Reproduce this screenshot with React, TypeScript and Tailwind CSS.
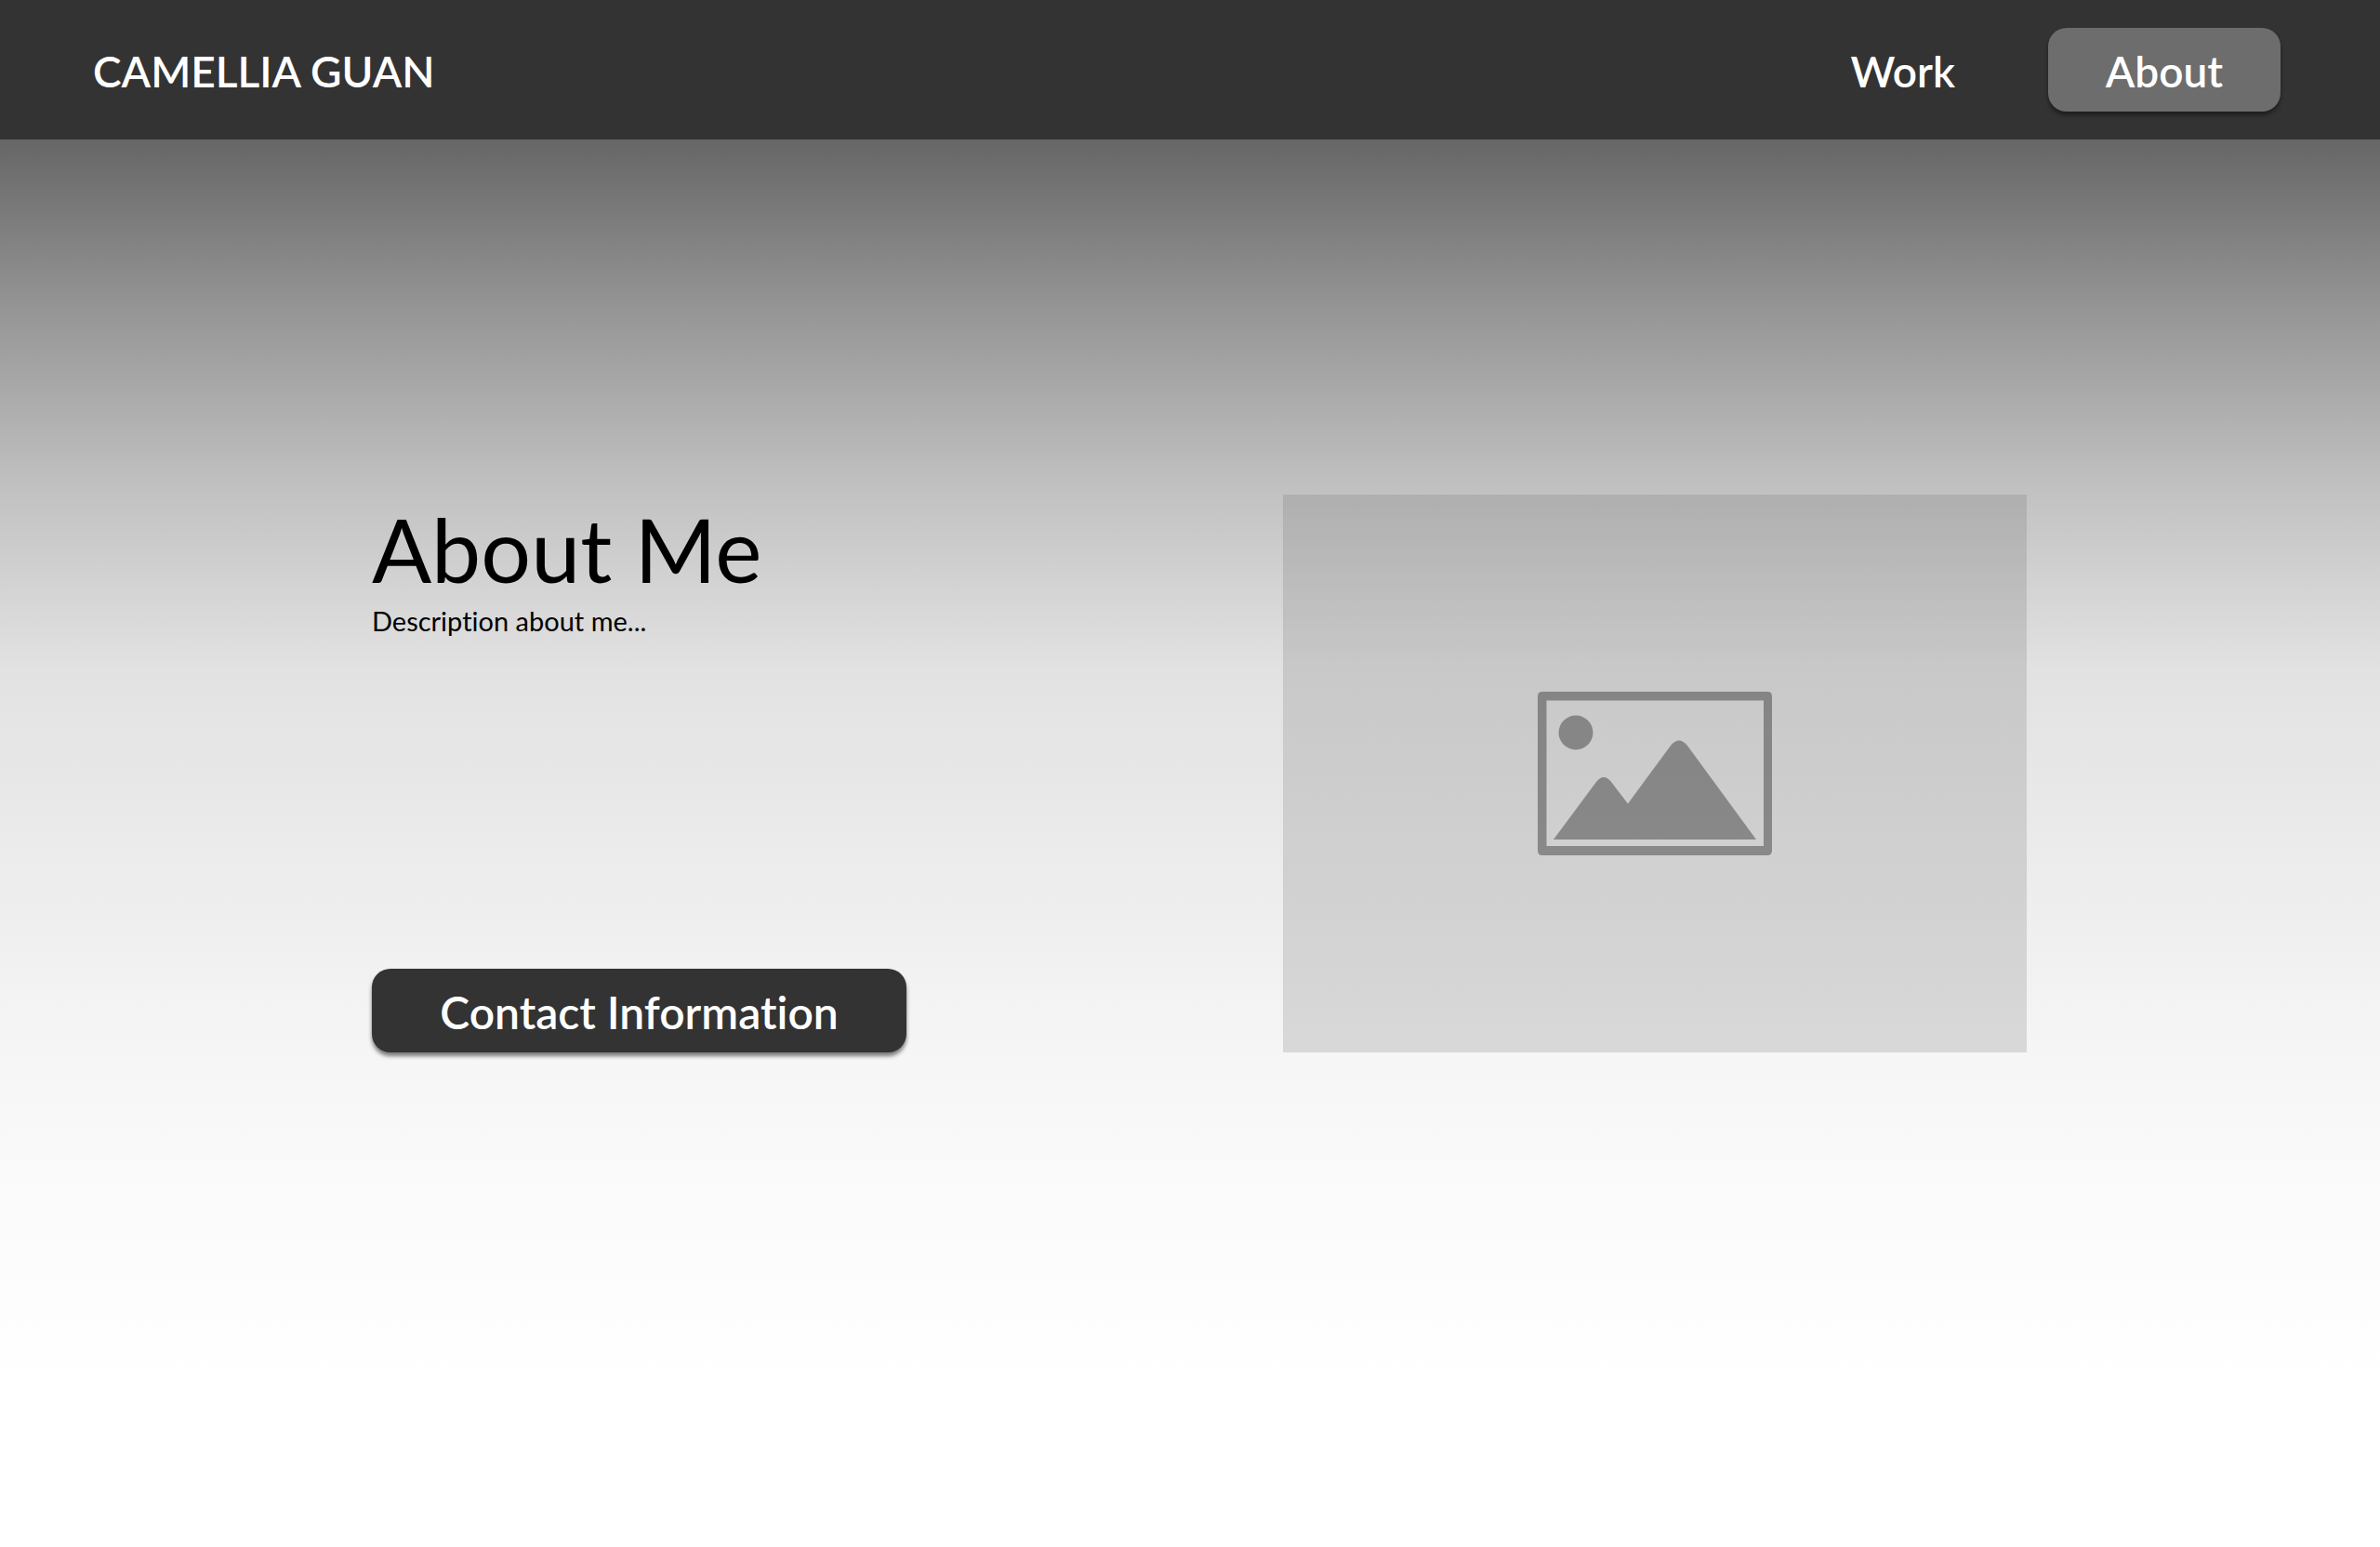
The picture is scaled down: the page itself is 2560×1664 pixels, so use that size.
function PlaceholderIcon() {
  return (
    <svg viewBox="0 0 252 176" className="w-63" fill="currentColor" aria-hidden="true">
      <path
        fillRule="evenodd"
        d="M5 0H247Q252 0 252 5V171Q252 176 247 176H5Q0 176 0 171V5Q0 0 5 0ZM9.500 9.500V166H243V9.500Z"
      />
      <circle cx="41" cy="44" r="18.500" />
      <path d="M17 159L63 97Q71 87 79 97L97 120.500L143 58Q152 47 161 58L235 159Z" />
    </svg>
  );
}

export default function App() {
  return (
    <div className="flex min-h-screen flex-col bg-white font-[Lato,sans-serif] text-black [font-variant-ligatures:none]">
      <header className="flex h-[150px] items-center justify-between bg-[#333333] pr-[107px] pl-[100px] text-[46px] leading-[60px] font-semibold text-white">
        <a href="#" className="pt-1">
          CAMELLIA GUAN
        </a>
        <nav className="flex items-center gap-[100px]">
          <a href="#work" className="pt-1">
            Work
          </a>
          <a
            href="#about"
            aria-current="page"
            className="flex h-[90px] w-[250px] items-center justify-center rounded-[20px] bg-[#6d6d6d] pt-1 shadow-[0_4px_4px_rgba(0,0,0,0.4)]"
          >
            About
          </a>
        </nav>
      </header>
      <main className="flex grow items-start justify-between bg-[linear-gradient(to_bottom,#666666_0px,#979797_190px,#c0c0c0_370px,#d5d5d5_490px,#e2e2e2_570px,#f6f6f6_990px,#fcfcfc_1190px,#ffffff_1350px)] pt-[382px] pr-[380px] pl-[400px]">
        <section className="flex h-[600px] flex-col items-start">
          <h1 className="text-[95px] leading-[116px]">About Me</h1>
          <p className="text-[29px] leading-[40px]">Description about me...</p>
          <button
            type="button"
            className="mt-auto h-[90px] w-[575px] rounded-[20px] bg-[#333333] pt-1 text-[48px] leading-[60px] font-semibold text-white shadow-[0_4px_4px_rgba(0,0,0,0.5)]"
          >
            Contact Information
          </button>
        </section>
        <div
          role="img"
          aria-label="Portrait placeholder"
          className="flex h-[600px] w-[800px] items-center justify-center bg-[#666666]/20 text-black/34"
        >
          <PlaceholderIcon />
        </div>
      </main>
    </div>
  );
}
